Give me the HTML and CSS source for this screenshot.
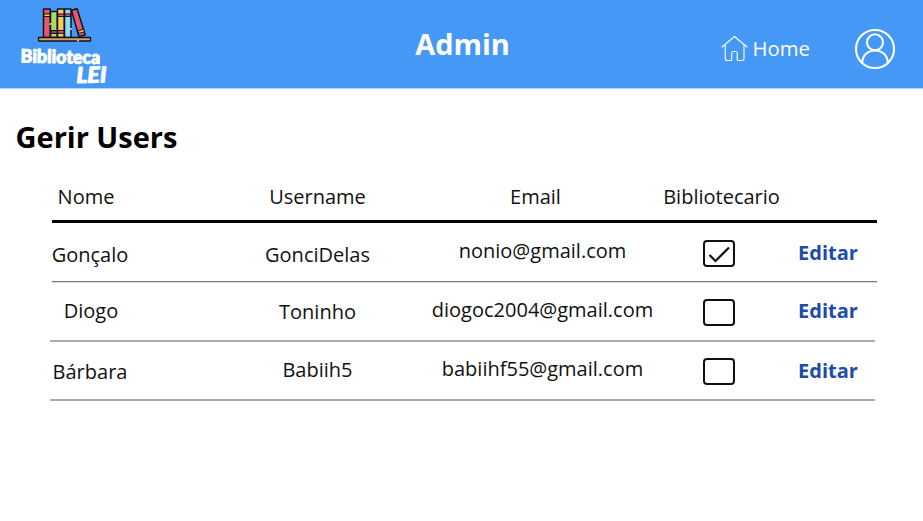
FILE: index.html
```html
<!DOCTYPE html>
<html lang="pt">
<head>
<meta charset="utf-8">
<title>Admin</title>
<link rel="stylesheet" href="styles.css">
</head>
<body>
<header class="topbar">
  <svg class="logo" viewBox="0 0 110 88" width="110" height="88">
    <g stroke="#10131c" stroke-width="1.5" stroke-linejoin="round">
      <path fill="#e8566f" d="M43.500 9h6.800v28.500h-6.800z"/>
      <path fill="#a5dc69" d="M50.500 11.500h6.800v26h-6.800z"/>
      <path fill="#fbc85c" d="M57.500 9h6.800v28.500h-6.800z"/>
      <path fill="#8fd8f8" d="M64.500 9h6.500v28.500h-6.500z"/>
      <path fill="#e8566f" d="M71.500 10.500l5.500-2 8.200 26.300-6.200 2z"/>
      <path fill="#d9a066" stroke-width="1.300" d="M38.500 37.500h52v3.500h-52z"/>
    </g>
    <g stroke="#10131c" stroke-width="1">
      <path fill="#fbc85c" d="M44 14h6v2.500h-6z"/>
      <path fill="#e8566f" d="M58 14h6v2.500h-6zM58 30.500h6v2.800h-6z"/>
      <path fill="#e8566f" d="M65 14h5.500v2.500h-5.500z"/>
      <path fill="#a9354f" d="M51 30.500h6v3h-6z"/>
      <path fill="#fbc85c" d="M78 31l5.800-1.900.8 2.500-5.800 1.900z"/>
    </g>
    <path fill="#fbc85c" d="M49.500 23h1.800v2h-1.800z"/>
    <path fill="#8fd8f8" d="M70 28h1.800v2h-1.800zM77 40h2v1.500h-2z"/>
    <text class="logo-text" x="20.500" y="62.500" font-size="18.500" textLength="79.500" lengthAdjust="spacingAndGlyphs" transform="rotate(1 20 63)">Biblioteca</text>
    <text class="logo-text lei" x="76.500" y="83" font-size="22" textLength="30" lengthAdjust="spacingAndGlyphs" transform="rotate(-1 77 83)">LEI</text>
  </svg>
  <h1 class="title">Admin</h1>
  <nav class="nav">
    <a class="home">
      <svg viewBox="0 0 28 28" width="28" height="28" fill="none" stroke="#fff" stroke-width="1.100" stroke-linecap="round" stroke-linejoin="round">
        <path d="M2 13L14.500 2.500 27 13M5.200 11v13.500q0 2 2 2h3.500q1 0 1-1v-6q0-2 1.500-2h2.500q1.500 0 1.500 2v6q0 1 1 1h4q1.800 0 1.800-2V11"/>
      </svg>
      <span class="home-label">Home</span>
    </a>
    <svg class="avatar" viewBox="0 0 42 42" width="42" height="42" fill="none" stroke="#fff" stroke-width="2.100">
      <circle cx="21" cy="21" r="19"/>
      <circle cx="21" cy="14.300" r="8"/>
      <path d="M8 35C8.500 27 14 22.500 21 22.500S33.500 27 34 35"/>
    </svg>
  </nav>
</header>
<main>
  <h2 class="heading">Gerir Users</h2>
  <section class="table">
    <div class="row head">
      <span class="nome">Nome</span><span>Username</span><span class="email">Email</span><span class="role">Bibliotecario</span>
    </div>
    <div class="row first">
      <span class="low">Gonçalo</span><span class="low">GonciDelas</span><span class="high">nonio@gmail.com</span>
      <svg class="check" viewBox="0 0 32 27" width="32" height="27"><rect x="1" y="1" width="30" height="25" rx="3"/><path d="M6.500 15L12.500 21 26 7.500"/></svg>
      <a class="edit">Editar</a>
    </div>
    <div class="row second">
      <span class="diogo">Diogo</span><span class="toninho">Toninho</span><span class="up">diogoc2004@gmail.com</span>
      <svg class="check" viewBox="0 0 32 27" width="32" height="27"><rect x="1" y="1" width="30" height="25" rx="3"/></svg>
      <a class="edit">Editar</a>
    </div>
    <div class="row third">
      <span class="barbara">Bárbara</span><span class="up">Babiih5</span><span class="high">babiihf55@gmail.com</span>
      <svg class="check" viewBox="0 0 32 27" width="32" height="27"><rect x="1" y="1" width="30" height="25" rx="3"/></svg>
      <a class="edit">Editar</a>
    </div>
  </section>
</main>
</body>
</html>
```
FILE: styles.css
```css
* { box-sizing: border-box; }
body {
  margin: 0;
  background: #fff;
  color: #111;
  font: 20px/28px "Open Sans", "Noto Sans", sans-serif;
}
.topbar {
  display: grid;
  grid-template-columns: 362.5px 200px 1fr;
  height: 88px;
  background: #4698f7;
  box-shadow: 0 1px #b5d6fc;
  color: #fff;
}
.logo-text {
  font-family: Lato, "Open Sans", sans-serif;
  font-weight: 900;
  fill: #fff;
  stroke: #fff;
  stroke-width: 1px;
  stroke-linejoin: round;
}
.lei { font-style: italic; }
.title {
  margin: 24px 0 0;
  font-size: 29px;
  line-height: 40px;
  text-align: center;
}
.nav {
  display: flex;
  justify-content: space-between;
  padding: 28px 27px 0 157.5px;
}
.home { display: flex; gap: 4.5px; height: 40px; align-items: center; }
.home-label { padding-top: 1px; font-size: 20.3px; line-height: 27px; }
.heading {
  margin: 29px 0 0 15.5px;
  color: #000;
  font-size: 29px;
  line-height: 40px;
}
.table { width: 825px; margin: 22px 0 0 52px; }
.row {
  display: grid;
  grid-template-columns: 76px 90px 199px 251px 102px 9px 98px;
  align-items: start;
  justify-items: center;
  white-space: nowrap;
}
.row > :nth-child(2) { grid-column: 3; }
.row > :nth-child(3) { grid-column: 4; }
.row > :nth-child(4) { grid-column: 5; }
.row > :nth-child(5) { grid-column: 7; }
.head { height: 44px; padding-top: 4px; border-bottom: 3px solid #000; }
.nome { margin-right: 8px; }
.email { margin-right: 14px; }
.role { margin: 0 -9px 0 -4px; }
.first { height: 59px; padding-top: 16px; border-bottom: 1px solid #777; box-shadow: 0 1px #ddd; }
.second { height: 60px; padding-top: 15px; border-bottom: 2px solid #aaa; }
.third { height: 59px; padding-top: 15px; border-bottom: 2px solid #aaa; }
.second, .third { margin: 0 2px 0 -2px; padding-left: 2px; }
.low { margin-top: 2px; }
.high { margin-top: -2px; }
.up { margin-top: -1px; }
.diogo { margin-left: 2px; }
.toninho, .barbara { margin-top: 1px; }
.check { margin-top: 1px; fill: none; stroke: #111; stroke-width: 2; }
.second .check { margin-top: 2px; }
.check path { stroke-width: 2.2; }
.edit { color: #204ba9; font-weight: 700; }
```
